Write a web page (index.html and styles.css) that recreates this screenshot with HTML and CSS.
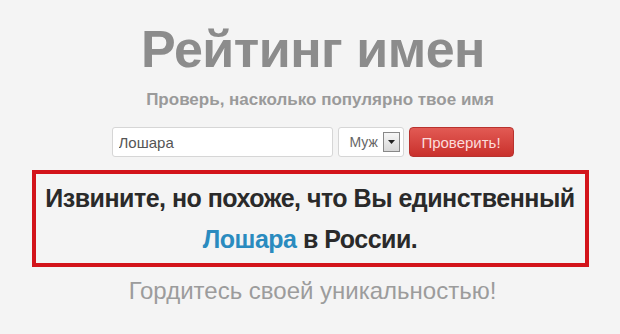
FILE: index.html
```html
<!DOCTYPE html>
<html lang="ru">
<head>
    <meta charset="UTF-8">
    <title>Рейтинг имен</title>
    <link rel="stylesheet" href="styles.css">
</head>
<body>
    <main class="page">
        <h1 class="title">Рейтинг имен</h1>
        <p class="subtitle">Проверь, насколько популярно твое имя</p>
        <form class="search">
            <input class="name-input" type="text" value="Лошара">
            <div class="gender">
                <span>Муж</span>
                <span class="gender-arrow">
                    <svg width="7" height="4" viewBox="0 0 7 4"><path d="M0 0h7L3.5 4z" fill="#222"/></svg>
                </span>
            </div>
            <button class="check" type="button">Проверить!</button>
        </form>
        <div class="result">
            <p>Извините, но похоже, что Вы единственный</p>
            <p><span class="name">Лошара</span> в России.</p>
        </div>
        <p class="proud">Гордитесь своей уникальностью!</p>
    </main>
</body>
</html>
```

FILE: styles.css
```css
html, body {
    margin: 0;
    background-color: #f4f4f4;
}
body {
    font-family: "Liberation Sans", Arial, sans-serif;
}
.page {
    display: flex;
    flex-direction: column;
    align-items: center;
    padding-top: 23px;
}
.title {
    margin: 0 0 0 6px;
    font-size: 52px;
    line-height: 52px;
    letter-spacing: -0.5px;
    color: #8c8c8c;
}
.subtitle {
    margin: 15px 0 0 20px;
    font-size: 17px;
    line-height: 20px;
    font-weight: bold;
    color: #9a9a9a;
}
.search {
    display: flex;
    gap: 5px;
    margin: 17px 0 0 5px;
}
.name-input {
    width: 221px;
    height: 30px;
    box-sizing: border-box;
    padding: 0 6px;
    border: 1px solid #d6d6d6;
    border-radius: 3px;
    background-color: #fff;
    font-family: inherit;
    font-size: 15px;
    color: #555;
}
.gender {
    display: flex;
    align-items: center;
    justify-content: space-between;
    width: 66px;
    height: 30px;
    box-sizing: border-box;
    padding: 0 3px 0 11px;
    border: 1px solid #d6d6d6;
    border-radius: 3px;
    background-color: #fff;
    font-size: 14px;
    color: #666;
}
.gender-arrow {
    display: flex;
    align-items: center;
    justify-content: center;
    width: 15px;
    height: 18px;
    border: 1px solid #888;
    background: linear-gradient(#f6f6f6, #d8d8d8);
}
.check {
    width: 105px;
    height: 30px;
    border: 1px solid #b8322e;
    border-radius: 4px;
    background: linear-gradient(#e25a54, #c9302c);
    color: #fbdcdb;
    font-family: inherit;
    font-size: 15px;
}
.result {
    width: 557px;
    box-sizing: border-box;
    margin: 13px 0 0 0;
    padding: 4px 0 3px;
    border: 4px solid #d3141b;
    text-align: center;
    font-size: 25px;
    font-weight: bold;
    letter-spacing: -0.5px;
    color: #2a2a2a;
}
.result p {
    margin: 0;
    line-height: 41px;
}
.name {
    color: #2a8bbf;
}
.proud {
    margin: 10px 0 0 5px;
    font-size: 24px;
    line-height: 28px;
    color: #9c9c9c;
}
```
